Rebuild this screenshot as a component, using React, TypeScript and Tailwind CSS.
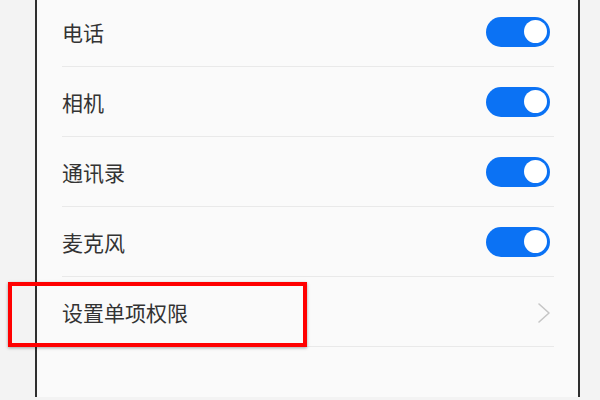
const toggles = ["电话", "相机", "通讯录", "麦克风"];

function Toggle() {
  return (
    <div className="mr-[4px] w-[64px] h-[30px] rounded-full bg-[#0b72f4] flex items-center justify-end pr-[3px]">
      <div className="w-[23px] h-[23px] rounded-full bg-white" />
    </div>
  );
}

export default function App() {
  return (
    <div
      className="relative w-[600px] h-[400px] overflow-hidden bg-[#f3f3f3]"
      style={{ fontFamily: '"Noto Sans CJK SC", "Noto Sans", sans-serif' }}
    >
      <div className="ml-[35px] w-[545px] h-full border-x-2 border-[#2e2e2e] bg-[#fafafa] pl-[25px] pr-[24px]">
        <div className="-mt-[3px]">
          {toggles.map((label) => (
            <div
              key={label}
              className="h-[70px] flex items-center justify-between border-b border-[#e9e9e9]"
            >
              <span className="text-[21px] text-[#333] pt-[3px]">{label}</span>
              <Toggle />
            </div>
          ))}
          <div className="h-[70px] flex items-center justify-between border-b border-[#e9e9e9]">
            <span className="text-[21px] text-[#333] pt-[3px]">设置单项权限</span>
            {/* chevron */}
            <svg width="14" height="22" viewBox="0 0 14 22" className="mr-[3px] mt-[2px]" fill="none">
              <polyline points="2,2 12,11 2,20" stroke="#c6c6c6" strokeWidth="1.6" strokeLinecap="round" strokeLinejoin="round" />
            </svg>
          </div>
        </div>
      </div>

      {/* highlight box */}
      <div className="absolute left-[8px] top-[282px] w-[299px] h-[65px] border-[4px] border-[#ff0000] shadow-[0_1px_3px_rgba(0,0,0,0.35)]" />
    </div>
  );
}
